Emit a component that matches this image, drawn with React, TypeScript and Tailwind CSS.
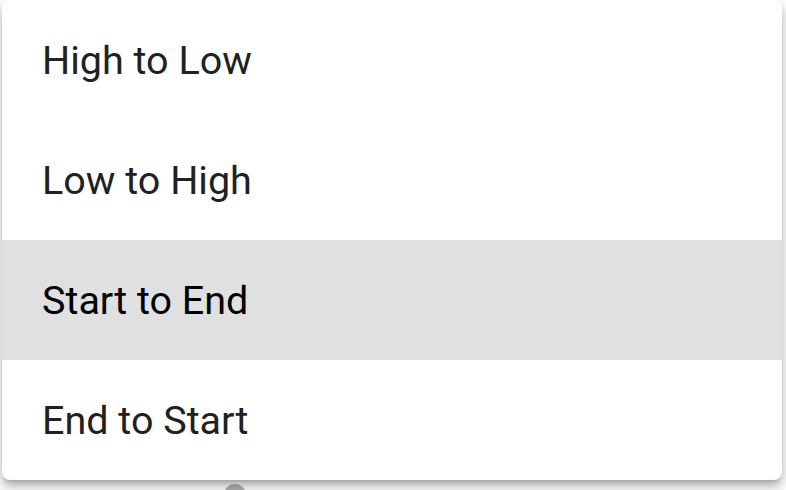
const options = ['High to Low', 'Low to High', 'Start to End', 'End to Start'];

export default function App() {
  const selected = 2;

  return (
    <div className="relative h-[490px] w-[786px] overflow-hidden bg-white">
      {/* thumb of something sitting under the menu */}
      <div className="absolute left-[224px] top-[484px] h-[22px] w-[22px] rounded-full bg-[#b0b0b0]" />
      <div className="relative ml-[2px] w-[780px] overflow-hidden rounded-lg bg-white shadow-[0px_5px_5px_-3px_rgba(0,0,0,0.2),0px_8px_10px_1px_rgba(0,0,0,0.14),0px_3px_14px_2px_rgba(0,0,0,0.12)]">
        <ul className="font-['Roboto',sans-serif]">
          {options.map((label, i) => (
            <li
              key={label}
              className={
                i === selected
                  ? 'flex h-[120px] items-center bg-[#e0e0e0] pl-[40px] pt-[1px] text-[39.5px] text-black'
                  : 'flex h-[120px] items-center pl-[40px] pt-[1px] text-[39.5px] text-[#212121]'
              }
            >
              {label}
            </li>
          ))}
        </ul>
      </div>
    </div>
  );
}
